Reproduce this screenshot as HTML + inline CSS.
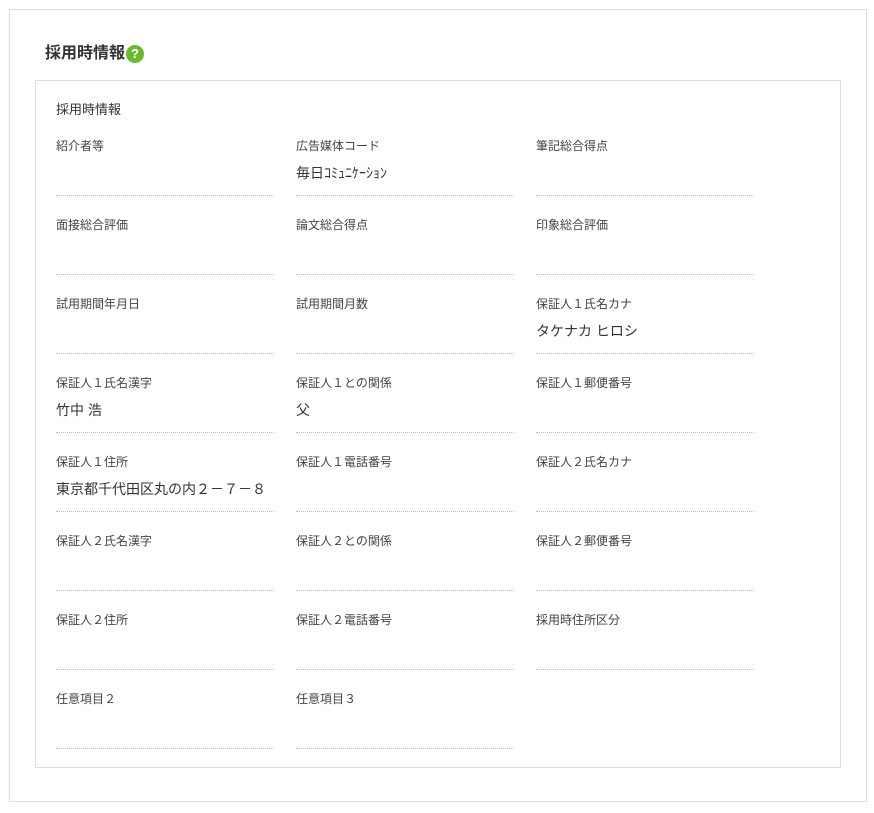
<!DOCTYPE html>
<html><head><meta charset="utf-8"><style>
body{margin:0;background:#fff;font-family:"Liberation Sans","Noto Sans CJK JP",sans-serif;color:#333;}
.outer{position:absolute;left:9px;top:9px;width:858px;height:793px;border:1px solid #ddd;box-sizing:border-box;}
.title{position:absolute;left:45px;top:44px;height:20px;font-size:16px;font-weight:bold;color:#333;line-height:20px;display:flex;align-items:center;}
.q{display:inline-block;width:18px;height:18px;border-radius:50%;background:#6bb833;color:#fff;font-size:13px;text-align:center;line-height:18px;margin-left:1px;}
.inner{position:absolute;left:35px;top:80px;width:806px;height:688px;border:1px solid #ddd;box-sizing:border-box;}
.sec{position:absolute;left:56px;top:101px;font-size:13px;line-height:18px;}
.f{position:absolute;width:218px;height:57px;border-bottom:1px dotted #bbb;}
.l{position:absolute;top:0;font-size:12px;line-height:16px;color:#444;}
.v{position:absolute;top:26px;font-size:14px;line-height:18px;color:#333;}
</style></head><body>
<div class="outer"></div>
<div class="title">採用時情報<span class="q">?</span></div>
<div class="inner"></div>
<div class="sec">採用時情報</div>

<div class="f" style="left:56px;top:138px"><div class="l">紹介者等</div></div>
<div class="f" style="left:296px;top:138px"><div class="l">広告媒体コード</div><div class="v">毎日ｺﾐｭﾆｹｰｼｮﾝ</div></div>
<div class="f" style="left:536px;top:138px"><div class="l">筆記総合得点</div></div>

<div class="f" style="left:56px;top:217px"><div class="l">面接総合評価</div></div>
<div class="f" style="left:296px;top:217px"><div class="l">論文総合得点</div></div>
<div class="f" style="left:536px;top:217px"><div class="l">印象総合評価</div></div>

<div class="f" style="left:56px;top:296px"><div class="l">試用期間年月日</div></div>
<div class="f" style="left:296px;top:296px"><div class="l">試用期間月数</div></div>
<div class="f" style="left:536px;top:296px"><div class="l">保証人１氏名カナ</div><div class="v">タケナカ ヒロシ</div></div>

<div class="f" style="left:56px;top:375px"><div class="l">保証人１氏名漢字</div><div class="v">竹中 浩</div></div>
<div class="f" style="left:296px;top:375px"><div class="l">保証人１との関係</div><div class="v">父</div></div>
<div class="f" style="left:536px;top:375px"><div class="l">保証人１郵便番号</div></div>

<div class="f" style="left:56px;top:454px"><div class="l">保証人１住所</div><div class="v">東京都千代田区丸の内２－７－８</div></div>
<div class="f" style="left:296px;top:454px"><div class="l">保証人１電話番号</div></div>
<div class="f" style="left:536px;top:454px"><div class="l">保証人２氏名カナ</div></div>

<div class="f" style="left:56px;top:533px"><div class="l">保証人２氏名漢字</div></div>
<div class="f" style="left:296px;top:533px"><div class="l">保証人２との関係</div></div>
<div class="f" style="left:536px;top:533px"><div class="l">保証人２郵便番号</div></div>

<div class="f" style="left:56px;top:612px"><div class="l">保証人２住所</div></div>
<div class="f" style="left:296px;top:612px"><div class="l">保証人２電話番号</div></div>
<div class="f" style="left:536px;top:612px"><div class="l">採用時住所区分</div></div>

<div class="f" style="left:56px;top:691px"><div class="l">任意項目２</div></div>
<div class="f" style="left:296px;top:691px"><div class="l">任意項目３</div></div>
</body></html>
